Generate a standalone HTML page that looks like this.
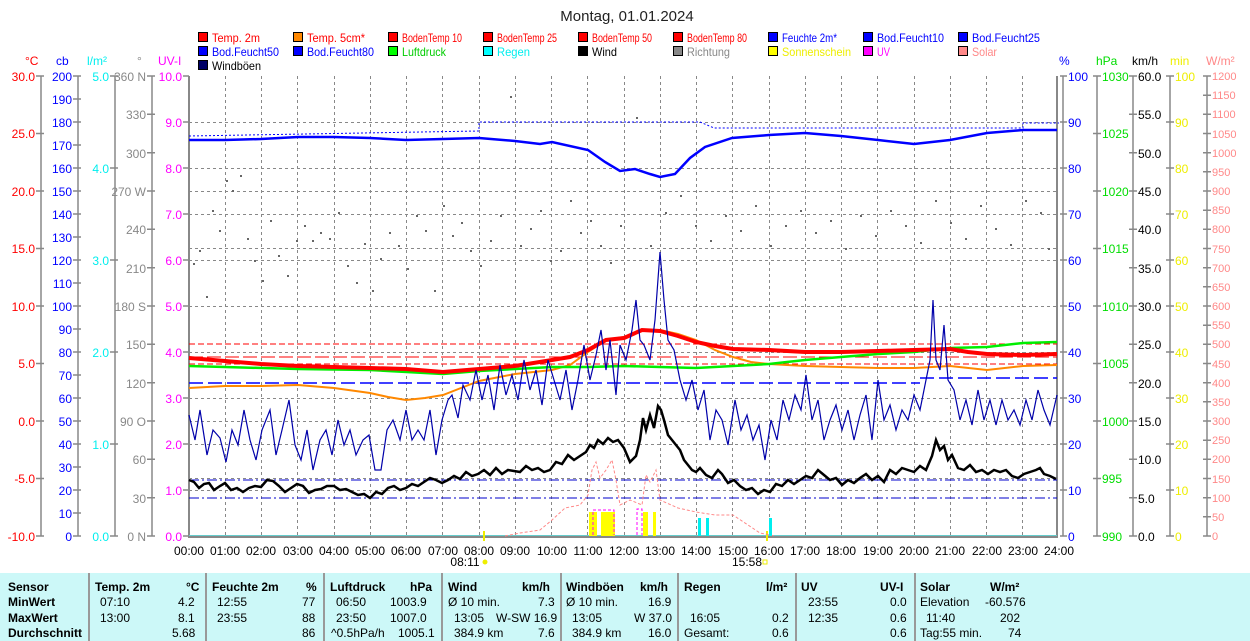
<!DOCTYPE html>
<html><head><meta charset="utf-8"><style>
body{margin:0;background:#fff;width:1250px;height:641px;overflow:hidden;position:relative;font-family:"Liberation Sans",sans-serif}
svg{position:absolute;left:0;top:0}
#tb{position:absolute;left:0;top:573px;width:1250px;height:68px;background:#ccf8f8;font-size:12px;color:#000}
#tb div{position:absolute;white-space:nowrap}
.b{font-weight:bold}
.s{position:absolute;top:0;width:2px;height:68px;background:#999}
</style></head><body>
<svg width="1250" height="573" font-family="Liberation Sans, sans-serif" font-size="12">
<text x="627" y="21" text-anchor="middle" font-size="15" fill="#222">Montag, 01.01.2024</text>
<!-- legend -->
<g stroke="#000" stroke-width="1">
<rect x="198.5" y="32.5" width="9" height="9" fill="#f00"/><rect x="293.5" y="32.5" width="9" height="9" fill="#f80"/><rect x="388.5" y="32.5" width="9" height="9" fill="#f00"/><rect x="483.5" y="32.5" width="9" height="9" fill="#f00"/><rect x="578.5" y="32.5" width="9" height="9" fill="#f00"/><rect x="673.5" y="32.5" width="9" height="9" fill="#f00"/><rect x="768.5" y="32.5" width="9" height="9" fill="#00f"/><rect x="863.5" y="32.5" width="9" height="9" fill="#00f"/><rect x="958.5" y="32.5" width="9" height="9" fill="#00f"/>
<rect x="198.5" y="46.5" width="9" height="9" fill="#00f"/><rect x="293.5" y="46.5" width="9" height="9" fill="#00f"/><rect x="388.5" y="46.5" width="9" height="9" fill="#0f0"/><rect x="483.5" y="46.5" width="9" height="9" fill="#0ff"/><rect x="578.5" y="46.5" width="9" height="9" fill="#000"/><rect x="673.5" y="46.5" width="9" height="9" fill="#888"/><rect x="768.5" y="46.5" width="9" height="9" fill="#ff0"/><rect x="863.5" y="46.5" width="9" height="9" fill="#f0f"/><rect x="958.5" y="46.5" width="9" height="9" fill="#f88"/>
<rect x="198.5" y="60.5" width="9" height="9" fill="#006"/>
</g>
<g font-size="12" lengthAdjust="spacingAndGlyphs">
<text x="212" y="42" fill="#f00" textLength="48" lengthAdjust="spacingAndGlyphs">Temp. 2m</text><text x="307" y="42" fill="#f00" textLength="58" lengthAdjust="spacingAndGlyphs">Temp. 5cm*</text><text x="402" y="42" fill="#f00" textLength="60" lengthAdjust="spacingAndGlyphs">BodenTemp 10</text><text x="497" y="42" fill="#f00" textLength="60" lengthAdjust="spacingAndGlyphs">BodenTemp 25</text><text x="592" y="42" fill="#f00" textLength="60" lengthAdjust="spacingAndGlyphs">BodenTemp 50</text><text x="687" y="42" fill="#f00" textLength="60" lengthAdjust="spacingAndGlyphs">BodenTemp 80</text><text x="782" y="42" fill="#00f" textLength="55" lengthAdjust="spacingAndGlyphs">Feuchte 2m*</text><text x="877" y="42" fill="#00f" textLength="67" lengthAdjust="spacingAndGlyphs">Bod.Feucht10</text><text x="972" y="42" fill="#00f" textLength="68" lengthAdjust="spacingAndGlyphs">Bod.Feucht25</text>
<text x="212" y="56" fill="#00f" textLength="67" lengthAdjust="spacingAndGlyphs">Bod.Feucht50</text><text x="307" y="56" fill="#00f" textLength="67" lengthAdjust="spacingAndGlyphs">Bod.Feucht80</text><text x="402" y="56" fill="#0c0" textLength="44" lengthAdjust="spacingAndGlyphs">Luftdruck</text><text x="497" y="56" fill="#0ee" textLength="33" lengthAdjust="spacingAndGlyphs">Regen</text><text x="592" y="56" fill="#000" textLength="25" lengthAdjust="spacingAndGlyphs">Wind</text><text x="687" y="56" fill="#888" textLength="43" lengthAdjust="spacingAndGlyphs">Richtung</text><text x="782" y="56" fill="#ee0" textLength="69" lengthAdjust="spacingAndGlyphs">Sonnenschein</text><text x="877" y="56" fill="#f0f" textLength="13" lengthAdjust="spacingAndGlyphs">UV</text><text x="972" y="56" fill="#f88" textLength="25" lengthAdjust="spacingAndGlyphs">Solar</text>
<text x="212" y="70" fill="#000" textLength="49" lengthAdjust="spacingAndGlyphs">Windböen</text>
</g>
<!-- units -->
<text x="25" y="65" fill="#f00">°C</text><text x="56" y="65" fill="#00f">cb</text><text x="87" y="65" fill="#0ee">l/m²</text><text x="137" y="65" fill="#888">°</text><text x="158" y="65" fill="#f0f">UV-I</text>
<text x="1059" y="65" fill="#00f">%</text><text x="1096" y="65" fill="#0d0">hPa</text><text x="1132" y="65" fill="#000">km/h</text><text x="1170" y="65" fill="#ee0">min</text><text x="1206" y="65" fill="#f88">W/m²</text>
<!-- grid -->
<g stroke="#888" stroke-dasharray="3,3" stroke-width="1">
<path d="M225.5 76V536M261.5 76V536M297.5 76V536M334.5 76V536M370.5 76V536M406.5 76V536M442.5 76V536M479.5 76V536M515.5 76V536M551.5 76V536M587.5 76V536M624.5 76V536M660.5 76V536M696.5 76V536M732.5 76V536M769.5 76V536M805.5 76V536M841.5 76V536M877.5 76V536M914.5 76V536M950.5 76V536M986.5 76V536M1022.5 76V536"/>
<path d="M189 122.5H1057M189 168.5H1057M189 214.5H1057M189 260.5H1057M189 306.5H1057M189 352.5H1057M189 398.5H1057M189 444.5H1057M189 490.5H1057M189 191.5H1057M189 248.5H1057M189 421.5H1057M189 478.5H1057"/>
</g>
<path d="M189 76V537H1057V76" fill="none" stroke="#888" stroke-width="2"/>
<line x1="189" y1="535.5" x2="1057" y2="535.5" stroke="#6cc" stroke-width="1"/>
<!-- axes -->
<g stroke="#888" stroke-width="1.5" fill="none">
<path d="M41 76V536M78 76V536M115 76V536M152 76V536M1063 76V536M1097 76V536M1133 76V536M1170 76V536M1207 76V536"/>
<path d="M36 76H44M36 133.5H44M36 191H44M36 248.5H44M36 306H44M36 363.5H44M36 421H44M36 478.5H44M36 536H44"/>
<path d="M73 76H81M73 99H81M73 122H81M73 145H81M73 168H81M73 191H81M73 214H81M73 237H81M73 260H81M73 283H81M73 306H81M73 329H81M73 352H81M73 375H81M73 398H81M73 421H81M73 444H81M73 467H81M73 490H81M73 513H81M73 536H81"/>
<path d="M110 76H118M110 168H118M110 260H118M110 352H118M110 444H118M110 536H118"/>
<path d="M147 76H155M147 114.3H155M147 152.7H155M147 191H155M147 229.3H155M147 267.7H155M147 306H155M147 344.3H155M147 382.7H155M147 421H155M147 459.3H155M147 497.7H155M147 536H155"/>
<path d="M183 76H189M183 122H189M183 168H189M183 214H189M183 260H189M183 306H189M183 352H189M183 398H189M183 444H189M183 490H189M183 536H189"/>
<path d="M1060 76H1067M1060 122H1067M1060 168H1067M1060 214H1067M1060 260H1067M1060 306H1067M1060 352H1067M1060 398H1067M1060 444H1067M1060 490H1067M1060 536H1067"/>
<path d="M1093 76H1101M1093 133.5H1101M1093 191H1101M1093 248.5H1101M1093 306H1101M1093 363.5H1101M1093 421H1101M1093 478.5H1101M1093 536H1101"/>
<path d="M1129 76H1137M1129 114.3H1137M1129 152.7H1137M1129 191H1137M1129 229.3H1137M1129 267.7H1137M1129 306H1137M1129 344.3H1137M1129 382.7H1137M1129 421H1137M1129 459.3H1137M1129 497.7H1137M1129 536H1137"/>
<path d="M1166 76H1174M1166 122H1174M1166 168H1174M1166 214H1174M1166 260H1174M1166 306H1174M1166 352H1174M1166 398H1174M1166 444H1174M1166 490H1174M1166 536H1174"/>
<path d="M1203 76H1211M1203 95.2H1211M1203 114.3H1211M1203 133.5H1211M1203 152.7H1211M1203 171.8H1211M1203 191H1211M1203 210.2H1211M1203 229.3H1211M1203 248.5H1211M1203 267.7H1211M1203 286.8H1211M1203 306H1211M1203 325.2H1211M1203 344.3H1211M1203 363.5H1211M1203 382.7H1211M1203 401.8H1211M1203 421H1211M1203 440.2H1211M1203 459.3H1211M1203 478.5H1211M1203 497.7H1211M1203 516.8H1211M1203 536H1211"/>
</g>
<g fill="#f00" text-anchor="end"><text x="35" y="81">30.0</text><text x="35" y="138">25.0</text><text x="35" y="196">20.0</text><text x="35" y="253">15.0</text><text x="35" y="311">10.0</text><text x="35" y="368">5.0</text><text x="35" y="426">0.0</text><text x="35" y="483">-5.0</text><text x="35" y="541">-10.0</text></g>
<g fill="#00f" text-anchor="end"><text x="72" y="81">200</text><text x="72" y="104">190</text><text x="72" y="127">180</text><text x="72" y="150">170</text><text x="72" y="173">160</text><text x="72" y="196">150</text><text x="72" y="219">140</text><text x="72" y="242">130</text><text x="72" y="265">120</text><text x="72" y="288">110</text><text x="72" y="311">100</text><text x="72" y="334">90</text><text x="72" y="357">80</text><text x="72" y="380">70</text><text x="72" y="403">60</text><text x="72" y="426">50</text><text x="72" y="449">40</text><text x="72" y="472">30</text><text x="72" y="495">20</text><text x="72" y="518">10</text><text x="72" y="541">0</text></g>
<g fill="#0ee" text-anchor="end"><text x="109" y="81">5.0</text><text x="109" y="173">4.0</text><text x="109" y="265">3.0</text><text x="109" y="357">2.0</text><text x="109" y="449">1.0</text><text x="109" y="541">0.0</text></g>
<g fill="#888" text-anchor="end"><text x="146" y="81">360 N</text><text x="146" y="119">330</text><text x="146" y="158">300</text><text x="146" y="196">270 W</text><text x="146" y="234">240</text><text x="146" y="273">210</text><text x="146" y="311">180 S</text><text x="146" y="349">150</text><text x="146" y="388">120</text><text x="146" y="426">90 O</text><text x="146" y="464">60</text><text x="146" y="503">30</text><text x="146" y="541">0 N</text></g>
<g fill="#f0f" text-anchor="end"><text x="182" y="81">10.0</text><text x="182" y="127">9.0</text><text x="182" y="173">8.0</text><text x="182" y="219">7.0</text><text x="182" y="265">6.0</text><text x="182" y="311">5.0</text><text x="182" y="357">4.0</text><text x="182" y="403">3.0</text><text x="182" y="449">2.0</text><text x="182" y="495">1.0</text><text x="182" y="541">0.0</text></g>
<g fill="#00f"><text x="1068" y="81">100</text><text x="1068" y="127">90</text><text x="1068" y="173">80</text><text x="1068" y="219">70</text><text x="1068" y="265">60</text><text x="1068" y="311">50</text><text x="1068" y="357">40</text><text x="1068" y="403">30</text><text x="1068" y="449">20</text><text x="1068" y="495">10</text><text x="1068" y="541">0</text></g>
<g fill="#0d0"><text x="1102" y="81">1030</text><text x="1102" y="138">1025</text><text x="1102" y="196">1020</text><text x="1102" y="253">1015</text><text x="1102" y="311">1010</text><text x="1102" y="368">1005</text><text x="1102" y="426">1000</text><text x="1102" y="483">995</text><text x="1102" y="541">990</text></g>
<g fill="#000"><text x="1138" y="81">60.0</text><text x="1138" y="119">55.0</text><text x="1138" y="158">50.0</text><text x="1138" y="196">45.0</text><text x="1138" y="234">40.0</text><text x="1138" y="273">35.0</text><text x="1138" y="311">30.0</text><text x="1138" y="349">25.0</text><text x="1138" y="388">20.0</text><text x="1138" y="426">15.0</text><text x="1138" y="464">10.0</text><text x="1138" y="503">5.0</text><text x="1138" y="541">0.0</text></g>
<g fill="#ee0"><text x="1175" y="81">100</text><text x="1175" y="127">90</text><text x="1175" y="173">80</text><text x="1175" y="219">70</text><text x="1175" y="265">60</text><text x="1175" y="311">50</text><text x="1175" y="357">40</text><text x="1175" y="403">30</text><text x="1175" y="449">20</text><text x="1175" y="495">10</text><text x="1175" y="541">0</text></g>
<g fill="#f88" font-size="11"><text x="1212" y="80">1200</text><text x="1212" y="99">1150</text><text x="1212" y="118">1100</text><text x="1212" y="138">1050</text><text x="1212" y="157">1000</text><text x="1212" y="176">950</text><text x="1212" y="195">900</text><text x="1212" y="214">850</text><text x="1212" y="233">800</text><text x="1212" y="253">750</text><text x="1212" y="272">700</text><text x="1212" y="291">650</text><text x="1212" y="310">600</text><text x="1212" y="329">550</text><text x="1212" y="348">500</text><text x="1212" y="368">450</text><text x="1212" y="387">400</text><text x="1212" y="406">350</text><text x="1212" y="425">300</text><text x="1212" y="444">250</text><text x="1212" y="463">200</text><text x="1212" y="483">150</text><text x="1212" y="502">100</text><text x="1212" y="521">50</text><text x="1212" y="540">0</text></g>
<!-- x labels -->
<g fill="#000" text-anchor="middle"><text x="189" y="555">00:00</text><text x="225" y="555">01:00</text><text x="261" y="555">02:00</text><text x="298" y="555">03:00</text><text x="334" y="555">04:00</text><text x="370" y="555">05:00</text><text x="406" y="555">06:00</text><text x="443" y="555">07:00</text><text x="479" y="555">08:00</text><text x="515" y="555">09:00</text><text x="552" y="555">10:00</text><text x="588" y="555">11:00</text><text x="624" y="555">12:00</text><text x="660" y="555">13:00</text><text x="696" y="555">14:00</text><text x="733" y="555">15:00</text><text x="769" y="555">16:00</text><text x="805" y="555">17:00</text><text x="841" y="555">18:00</text><text x="878" y="555">19:00</text><text x="914" y="555">20:00</text><text x="950" y="555">21:00</text><text x="987" y="555">22:00</text><text x="1023" y="555">23:00</text><text x="1059" y="555">24:00</text>
<text x="465" y="566">08:11</text><text x="747" y="566">15:58</text></g>
<circle cx="485" cy="562" r="2.5" fill="#ee0"/><rect x="763" y="560" width="4" height="4" fill="none" stroke="#ee0"/>
<path d="M484 531V541M767 531V541" stroke="#ee0" stroke-width="2"/>
<!-- direction dots -->
<g fill="#666"><rect x="193" y="263" width="2" height="2"/><rect x="199" y="250" width="2" height="2"/><rect x="206" y="296" width="2" height="2"/><rect x="212" y="210" width="2" height="2"/><rect x="219" y="230" width="2" height="2"/><rect x="226" y="180" width="2" height="2"/><rect x="232" y="190" width="2" height="2"/><rect x="240" y="175" width="2" height="2"/><rect x="247" y="238" width="2" height="2"/><rect x="254" y="260" width="2" height="2"/><rect x="262" y="280" width="2" height="2"/><rect x="270" y="220" width="2" height="2"/><rect x="278" y="255" width="2" height="2"/><rect x="287" y="275" width="2" height="2"/><rect x="296" y="240" width="2" height="2"/><rect x="304" y="225" width="2" height="2"/><rect x="312" y="240" width="2" height="2"/><rect x="320" y="232" width="2" height="2"/><rect x="329" y="238" width="2" height="2"/><rect x="338" y="212" width="2" height="2"/><rect x="347" y="265" width="2" height="2"/><rect x="356" y="282" width="2" height="2"/><rect x="364" y="243" width="2" height="2"/><rect x="372" y="290" width="2" height="2"/><rect x="380" y="258" width="2" height="2"/><rect x="389" y="232" width="2" height="2"/><rect x="398" y="245" width="2" height="2"/><rect x="407" y="268" width="2" height="2"/><rect x="416" y="215" width="2" height="2"/><rect x="425" y="230" width="2" height="2"/><rect x="434" y="290" width="2" height="2"/><rect x="443" y="205" width="2" height="2"/><rect x="452" y="235" width="2" height="2"/><rect x="461" y="222" width="2" height="2"/><rect x="470" y="250" width="2" height="2"/><rect x="480" y="265" width="2" height="2"/><rect x="490" y="240" width="2" height="2"/><rect x="500" y="215" width="2" height="2"/><rect x="510" y="96" width="2" height="2"/><rect x="520" y="245" width="2" height="2"/><rect x="530" y="228" width="2" height="2"/><rect x="540" y="210" width="2" height="2"/><rect x="550" y="260" width="2" height="2"/><rect x="560" y="250" width="2" height="2"/><rect x="570" y="200" width="2" height="2"/><rect x="580" y="232" width="2" height="2"/><rect x="590" y="220" width="2" height="2"/><rect x="600" y="245" width="2" height="2"/><rect x="610" y="262" width="2" height="2"/><rect x="620" y="225" width="2" height="2"/><rect x="636" y="117" width="2" height="2"/><rect x="650" y="245" width="2" height="2"/><rect x="665" y="212" width="2" height="2"/><rect x="680" y="195" width="2" height="2"/><rect x="695" y="225" width="2" height="2"/><rect x="710" y="240" width="2" height="2"/><rect x="725" y="215" width="2" height="2"/><rect x="740" y="230" width="2" height="2"/><rect x="755" y="205" width="2" height="2"/><rect x="770" y="245" width="2" height="2"/><rect x="785" y="225" width="2" height="2"/><rect x="800" y="210" width="2" height="2"/><rect x="815" y="232" width="2" height="2"/><rect x="830" y="220" width="2" height="2"/><rect x="845" y="248" width="2" height="2"/><rect x="860" y="215" width="2" height="2"/><rect x="875" y="235" width="2" height="2"/><rect x="890" y="210" width="2" height="2"/><rect x="905" y="225" width="2" height="2"/><rect x="920" y="242" width="2" height="2"/><rect x="935" y="200" width="2" height="2"/><rect x="950" y="222" width="2" height="2"/><rect x="965" y="238" width="2" height="2"/><rect x="980" y="205" width="2" height="2"/><rect x="995" y="228" width="2" height="2"/><rect x="1010" y="244" width="2" height="2"/><rect x="1025" y="200" width="2" height="2"/><rect x="1040" y="212" width="2" height="2"/><rect x="1048" y="248" width="2" height="2"/></g>
<!-- reference lines -->
<path d="M189 344H1057" stroke="#f00" stroke-dasharray="6,3"/>
<path d="M189 364H1057" stroke="#f00" stroke-dasharray="6,3"/>
<path d="M189 357H1057" stroke="#f00" stroke-dasharray="14,4"/>
<path d="M189 383H920M920 378H1057" stroke="#00f" stroke-width="1.5" stroke-dasharray="14,5"/>
<path d="M189 480H1057M189 498H1057" stroke="#00c" stroke-dasharray="10,3,2,3"/>
<path d="M189 136L479 131L479 122L700 122L714 128L1023 128L1023 123L1059 123" fill="none" stroke="#00f" stroke-dasharray="2,2"/>
<!-- humidity -->
<polyline fill="none" stroke="#00f" stroke-width="2.5" points="189,140 225,140 261,139 298,137 334,137 370,138 406,140 443,139 479,138 515,141 540,144 552,142 588,150 605,162 620,171 635,169 650,174 660,177 675,174 690,158 705,147 732,138 769,135 805,133 841,136 878,140 914,144 950,140 987,133 1023,130 1057,130"/>
<!-- solar -->
<polyline fill="none" stroke="#f88" stroke-dasharray="3,2" points="505,536 520,533 540,530 552,520 565,508 580,505 588,495 592,470 596,462 600,478 606,470 612,460 616,480 620,505 630,500 642,505 646,475 650,482 656,470 660,500 678,508 696,512 715,515 733,515 748,525 760,533 775,536"/>
<!-- rain / sun / uv -->
<g fill="#ff0"><rect x="589" y="512" width="8" height="24"/><rect x="601" y="512" width="14" height="24"/><rect x="643" y="512" width="5" height="24"/><rect x="653" y="512" width="3" height="24"/></g>
<g fill="#0ee"><rect x="698" y="518" width="3" height="18"/><rect x="706" y="518" width="3" height="18"/><rect x="769" y="518" width="3" height="18"/></g>
<path d="M593 535V510H614V535M637 535V509H642V535" fill="none" stroke="#f0f" stroke-dasharray="3,2"/>
<!-- temperature etc -->
<polyline fill="none" stroke="#f80" stroke-width="2" points="189,388 225,386 261,386 298,385 334,388 370,393 388,397 406,400 425,398 443,395 461,388 479,381 515,374 552,370 570,365 588,352 606,340 624,337 642,330 660,330 678,334 696,340 715,350 733,357 751,362 769,364 805,366 841,367 878,368 914,368 950,366 987,370 1023,366 1057,365"/>
<polyline fill="none" stroke="#0e0" stroke-width="2.5" points="189,366 225,367 298,369 370,370 443,374 479,371 515,369 552,367 588,367 624,366 660,367 696,368 733,366 769,364 805,360 841,357 878,354 914,352 950,348 987,347 1023,343 1057,342"/>
<polyline fill="none" stroke="#f00" stroke-width="4" points="189,358 225,361 261,364 298,366 334,367 370,368 406,369 443,372 479,369 515,366 552,360 570,357 588,350 606,340 624,338 642,330 660,331 678,336 696,342 715,346 733,349 769,350 805,352 841,352 878,351 914,350 950,349 968,352 987,354 1023,355 1057,354"/>
<!-- gusts -->
<polyline fill="none" stroke="#00a" stroke-width="1.2" points="189,415 195,440 200,410 207,455 213,430 220,438 226,462 232,430 238,445 244,410 250,440 256,460 262,430 270,410 276,455 282,430 289,400 295,445 301,460 307,430 313,470 320,440 326,430 332,455 338,420 344,445 350,430 356,455 363,440 369,435 375,470 381,470 387,430 393,420 400,440 406,410 412,440 418,430 424,440 430,410 436,455 442,420 448,400 452,395 458,418 463,385 470,400 476,370 482,400 488,375 494,410 500,365 506,395 512,375 518,400 524,360 530,390 536,370 542,405 548,360 554,380 560,400 566,370 572,410 578,380 584,345 590,380 596,355 601,330 606,370 610,340 616,395 620,345 626,360 632,330 636,300 640,340 644,345 650,360 655,320 660,252 664,300 668,340 674,350 680,380 686,400 692,380 698,410 704,390 710,440 716,410 722,420 728,445 735,400 741,430 747,415 753,440 759,425 765,460 771,420 777,440 783,400 789,420 795,395 801,410 806,375 812,420 818,400 824,440 830,420 836,405 842,430 848,410 854,440 860,415 866,395 872,440 878,380 884,420 890,405 896,430 902,410 908,420 914,395 920,410 926,380 930,360 933,300 936,360 940,370 944,325 948,380 954,390 960,420 966,400 972,425 978,390 984,420 990,400 996,425 1002,400 1008,420 1014,410 1020,425 1026,400 1032,420 1038,390 1044,410 1050,425 1057,395"/>
<!-- wind -->
<polyline fill="none" stroke="#000" stroke-width="2.5" points="189,480 194,482 199,488 204,484 209,483 214,490 220,486 225,483 231,490 237,488 243,492 249,488 255,486 261,487 267,480 273,481 279,486 285,492 291,488 297,484 303,486 309,493 315,490 321,489 327,486 334,486 340,490 346,489 352,492 358,495 364,494 370,498 376,492 382,494 388,488 394,486 400,490 406,488 412,484 418,486 424,482 430,478 436,480 442,483 448,480 454,476 460,479 466,472 472,476 478,474 484,470 490,475 496,468 502,474 508,470 514,471 520,472 526,466 532,470 538,468 544,472 550,470 556,462 562,464 568,455 574,460 580,456 586,452 590,445 594,448 598,440 603,444 608,438 613,442 618,440 624,448 630,462 636,456 640,440 643,418 646,430 650,415 654,428 658,406 661,410 664,420 668,435 672,440 676,445 680,450 684,460 688,465 692,470 696,472 700,468 706,475 712,478 718,470 722,474 728,483 734,480 740,486 746,490 752,488 758,494 764,490 770,492 776,484 782,486 788,480 794,484 800,480 806,476 812,478 818,470 824,475 830,480 836,478 842,485 848,480 854,483 860,478 866,474 872,480 878,476 884,482 890,470 896,474 902,468 908,470 914,472 920,466 926,470 932,456 936,440 940,450 944,446 948,460 952,455 958,468 964,470 970,465 976,472 982,470 988,474 994,470 1000,472 1006,470 1012,476 1018,478 1024,474 1030,472 1036,470 1040,468 1044,474 1050,476 1056,479"/>
</svg>
<div id="tb">
<div class="s" style="left:88px"></div><div class="s" style="left:205px"></div><div class="s" style="left:323px"></div><div class="s" style="left:441px"></div><div class="s" style="left:560px"></div><div class="s" style="left:677px"></div><div class="s" style="left:795px"></div><div class="s" style="left:914px"></div>
<div class="b" style="left:8px;top:7px">Sensor</div><div class="b" style="left:8px;top:22px">MinWert</div><div class="b" style="left:8px;top:38px">MaxWert</div><div class="b" style="left:8px;top:53px">Durchschnitt</div>
<div class="b" style="left:95px;top:7px">Temp. 2m</div><div class="b" style="left:186px;top:7px">°C</div>
<div style="left:100px;top:22px">07:10</div><div style="left:178px;top:22px">4.2</div><div style="left:100px;top:38px">13:00</div><div style="left:178px;top:38px">8.1</div><div style="left:172px;top:53px">5.68</div>
<div class="b" style="left:212px;top:7px">Feuchte 2m</div><div class="b" style="left:306px;top:7px">%</div>
<div style="left:217px;top:22px">12:55</div><div style="left:302px;top:22px">77</div><div style="left:217px;top:38px">23:55</div><div style="left:302px;top:38px">88</div><div style="left:302px;top:53px">86</div>
<div class="b" style="left:330px;top:7px">Luftdruck</div><div class="b" style="left:410px;top:7px">hPa</div>
<div style="left:336px;top:22px">06:50</div><div style="left:390px;top:22px">1003.9</div><div style="left:336px;top:38px">23:50</div><div style="left:390px;top:38px">1007.0</div><div style="left:331px;top:53px">^0.5hPa/h</div><div style="left:398px;top:53px">1005.1</div>
<div class="b" style="left:448px;top:7px">Wind</div><div class="b" style="left:522px;top:7px">km/h</div>
<div style="left:448px;top:22px">Ø 10 min.</div><div style="left:538px;top:22px">7.3</div><div style="left:454px;top:38px">13:05</div><div style="left:496px;top:38px">W-SW 16.9</div><div style="left:454px;top:53px">384.9 km</div><div style="left:538px;top:53px">7.6</div>
<div class="b" style="left:566px;top:7px">Windböen</div><div class="b" style="left:640px;top:7px">km/h</div>
<div style="left:566px;top:22px">Ø 10 min.</div><div style="left:648px;top:22px">16.9</div><div style="left:572px;top:38px">13:05</div><div style="left:634px;top:38px">W 37.0</div><div style="left:572px;top:53px">384.9 km</div><div style="left:648px;top:53px">16.0</div>
<div class="b" style="left:684px;top:7px">Regen</div><div class="b" style="left:766px;top:7px">l/m²</div>
<div style="left:690px;top:38px">16:05</div><div style="left:772px;top:38px">0.2</div><div style="left:684px;top:53px">Gesamt:</div><div style="left:772px;top:53px">0.6</div>
<div class="b" style="left:801px;top:7px">UV</div><div class="b" style="left:880px;top:7px">UV-I</div>
<div style="left:808px;top:22px">23:55</div><div style="left:890px;top:22px">0.0</div><div style="left:808px;top:38px">12:35</div><div style="left:890px;top:38px">0.6</div><div style="left:890px;top:53px">0.6</div>
<div class="b" style="left:920px;top:7px">Solar</div><div class="b" style="left:990px;top:7px">W/m²</div>
<div style="left:920px;top:22px">Elevation</div><div style="left:985px;top:22px">-60.576</div><div style="left:926px;top:38px">11:40</div><div style="left:1000px;top:38px">202</div><div style="left:920px;top:53px">Tag:55 min.</div><div style="left:1008px;top:53px">74</div>
</div>
</body></html>
